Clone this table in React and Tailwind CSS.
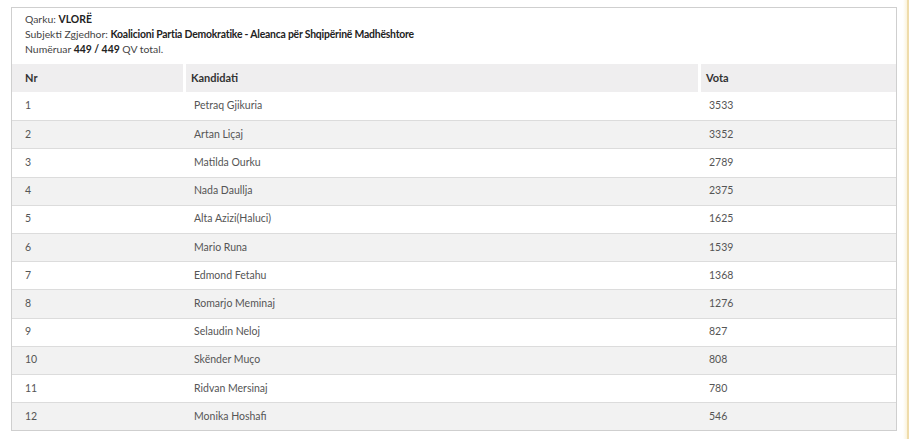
import React from "react";

const rows = [
  ["1", "Petraq Gjikuria", "3533"],
  ["2", "Artan Liçaj", "3352"],
  ["3", "Matilda Ourku", "2789"],
  ["4", "Nada Daullja", "2375"],
  ["5", "Alta Azizi(Haluci)", "1625"],
  ["6", "Mario Runa", "1539"],
  ["7", "Edmond Fetahu", "1368"],
  ["8", "Romarjo Meminaj", "1276"],
  ["9", "Selaudin Neloj", "827"],
  ["10", "Skënder Muço", "808"],
  ["11", "Ridvan Mersinaj", "780"],
  ["12", "Monika Hoshafi", "546"],
];

export default function App() {
  return (
    <div
      className="flex w-[910px] h-[439px] bg-white text-[#555] overflow-hidden"
      style={{ fontFamily: "Lato, 'Open Sans', sans-serif" }}
    >
      <div className="flex-1 pl-[11px] pt-[7px]">
        <div className="w-[886px] border border-[#cfcfcf]">
          <div className="pl-[13px] pt-[4px] text-[10.4px] leading-[15px] text-[#444]">
            <div>
              Qarku: <span className="font-bold text-[#222]">VLORË</span>
            </div>
            <div>
              Subjekti Zgjedhor:{" "}
              <span className="font-bold text-[#222] tracking-[-0.2px]">
                Koalicioni Partia Demokratike - Aleanca për Shqipërinë Madhështore
              </span>
            </div>
            <div>
              Numëruar <span className="font-bold text-[#222]">449 / 449</span> QV total.
            </div>
          </div>
          <div className="mt-[7px]">
            <div className="flex h-[28px] text-[11px] font-bold text-[#333]">
              <div className="w-[174px] bg-[#efeeef] flex items-center pl-[13px] border-r-[3px] border-white">
                Nr
              </div>
              <div className="w-[515px] bg-[#efeeef] flex items-center pl-[5px] border-r-[3px] border-white">
                Kandidati
              </div>
              <div className="flex-1 bg-[#efeeef] flex items-center pl-[5px]">Vota</div>
            </div>
            {rows.map((r, i) => (
              <div
                key={r[0]}
                className={`flex h-[28.2px] text-[10.5px] text-[#555] ${
                  i > 0 ? "border-t border-[#dcdcdc]" : ""
                } ${i % 2 === 1 ? "bg-[#f2f2f2]" : "bg-white"}`}
              >
                <div className="w-[174px] flex items-center pl-[13px]">{r[0]}</div>
                <div className="w-[515px] flex items-center pl-[8px]">{r[1]}</div>
                <div className="flex-1 flex items-center pl-[8px]">{r[2]}</div>
              </div>
            ))}
          </div>
        </div>
      </div>
      <div className="w-[4px] bg-gradient-to-r from-white to-[#fbf3dc]" />
      <div className="w-[2px] bg-[#efdcab]" />
      <div className="w-[1px] bg-white" />
    </div>
  );
}
